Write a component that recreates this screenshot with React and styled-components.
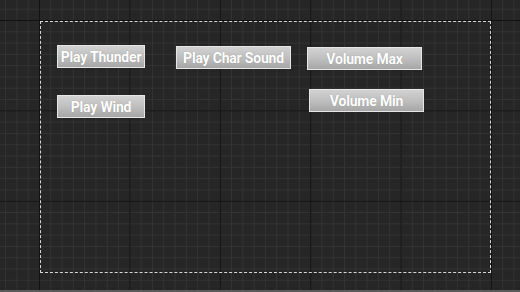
import React from 'react'
import styled, { createGlobalStyle } from 'styled-components'

const GlobalStyle = createGlobalStyle`
  html, body {
    margin: 0;
    padding: 0;
    width: 520px;
    height: 292px;
    overflow: hidden;
    background: #262626;
  }
`;

const buttons = [
  { label: 'Play Thunder', x: 16, y: 23, w: 88, h: 23 },
  { label: 'Play Wind', x: 16, y: 73, w: 88, h: 23 },
  { label: 'Play Char Sound', x: 135, y: 24, w: 115, h: 23 },
  { label: 'Volume Max', x: 266, y: 25, w: 115, h: 23 },
  { label: 'Volume Min', x: 268, y: 67, w: 115, h: 23 },
];

const Designer = styled.div`
  width: 520px;
  height: 292px;
  box-sizing: border-box;
  padding: 21px 0 0 40px;
  background-color: #262626;
  background-image:
    linear-gradient(to right, #121212 1px, transparent 1px),
    linear-gradient(to bottom, #121212 1px, transparent 1px),
    linear-gradient(to right, #333333 1px, transparent 1px),
    linear-gradient(to bottom, #333333 1px, transparent 1px);
  background-size: 90.4px 90.4px, 90.4px 90.4px, 11.3px 11.3px, 11.3px 11.3px;
  background-position: 39px 20px, 39px 20px, 39px 20px, 39px 20px;
  border-bottom: 2px solid #5a5a5a;
  font-family: Roboto, "Liberation Sans", sans-serif;
`;

const Frame = styled.div`
  position: relative;
  width: 451px;
  height: 252px;
  box-sizing: border-box;
  border: 1px dashed #d6d6d6;
`;

const Button = styled.div`
  position: absolute;
  box-sizing: border-box;
  display: flex;
  align-items: center;
  justify-content: center;
  border: 1px solid #e6e6e6;
  background: linear-gradient(to bottom, #d2d2d2 0%, #bdbdbd 55%, #a6a6a6 100%);
  color: #ffffff;
  font-size: 14px;
  font-weight: 700;
  letter-spacing: -0.2px;
  white-space: nowrap;
  text-shadow: 0 0 1px rgba(0, 0, 0, 0.25);
`;

const App = () => {
  return <>
    <GlobalStyle />
    <Designer>
      <Frame>
        {buttons.map((b) => (
          <Button
            key={b.label}
            style={{ left: b.x, top: b.y, width: b.w, height: b.h }}
          >{b.label}</Button>
        ))}
      </Frame>
    </Designer>
  </>
}

export default App;
